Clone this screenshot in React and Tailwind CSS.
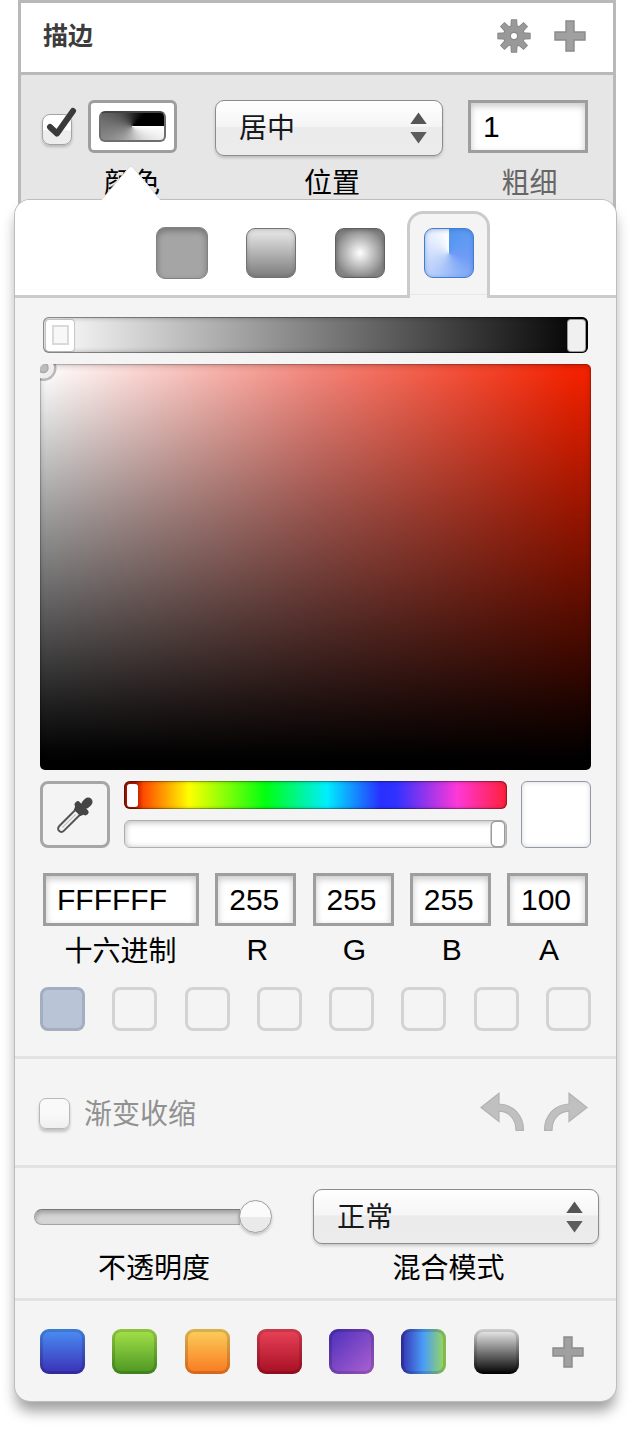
import React from "react";

const HEAVY = "border-[3px] border-[#9e9e9e] bg-white";

function PlusIcon({ className }) {
  return (
    <svg className={className} width="32" height="32" viewBox="0 0 32 32">
      <path d="M12 1h8v11h11v8H20v11h-8V20H1v-8h11z" fill="#a0a0a0" stroke="#8a8a8a" strokeWidth="1.4" />
    </svg>
  );
}

function GearIcon() {
  const teeth = [0, 45, 90, 135, 180, 225, 270, 315];
  const shape = (
    <>
      <circle cx="17" cy="17" r="10" />
      {teeth.map((a) => (
        <path key={a} d="M14.2 9 14.7 1.2h4.6L19.8 9z" transform={`rotate(${a} 17 17)`} />
      ))}
    </>
  );
  return (
    <svg className="mr-[-1px] mb-[4px]" width="34" height="34" viewBox="0 0 34 34">
      <g fill="#999" stroke="#888" strokeWidth="1.8">{shape}</g>
      <g fill="#999">{shape}</g>
      <circle cx="17" cy="17" r="3.6" fill="#fff" stroke="#888" strokeWidth="1.2" />
    </svg>
  );
}

function Stepper() {
  return (
    <svg width="17" height="32" viewBox="0 0 17 32">
      <path d="M8.5 0.5 16.7 12H.3z" fill="#555" />
      <path d="M8.5 31.5 16.7 20H.3z" fill="#5c5c5c" />
    </svg>
  );
}

function Select({ value, className }) {
  return (
    <div
      className={`flex h-[56px] items-center justify-between rounded-[9px] border-[1.5px] border-[#8c8c8c] bg-[linear-gradient(to_bottom,#ffffff_0%,#f5f5f5_47%,#ebebeb_49%,#ececec_100%)] pr-[15px] pl-[23px] shadow-[0_2px_3px_rgba(0,0,0,0.18)] ${className}`}
    >
      <span className="mt-[2px] text-[28px] leading-none text-[#16191c]">{value}</span>
      <Stepper />
    </div>
  );
}

function Field({ value, className }) {
  return (
    <div
      className={`flex h-[53px] items-center text-[30px] leading-none shadow-[inset_0_3px_7px_rgba(0,0,0,0.22)] ${HEAVY} ${className}`}
    >
      {value}
    </div>
  );
}

function Undo({ flip }) {
  return (
    <svg className={flip ? "-scale-x-100" : ""} width="45" height="40" viewBox="0 0 45 40">
      <path
        d="M1 15.500 19 1.300V12C33 12.500 43.500 23 43.500 38.300H36C36 27 29 19.500 19 19.200V29.500z"
        fill="#c0c0c0"
        stroke="#b3b3b3"
        strokeWidth="1.200"
      />
    </svg>
  );
}

function Eyedropper() {
  return (
    <svg width="36" height="36" viewBox="0 0 36 36">
      <g transform="rotate(45 18 18)">
        <rect x="14.700" y="11" width="6.600" height="29.500" rx="3.300" fill="#f4f4f4" stroke="#555" strokeWidth="2" />
        <path d="M18 17v19" stroke="#bbb" strokeWidth="1" />
        <rect x="13.600" y="-5" width="8.800" height="12" rx="4.400" fill="#454545" />
        <path d="M14.600 3h6.800v4h-6.800z" fill="#454545" />
        <path d="M12 5.500h12q2.500 .3 2.500 3t-2.500 3.300l-1.500 3.200h-9L12 11.800q-2.500-.3-2.500-3.300t2.500-3z" fill="#454545" />
      </g>
    </svg>
  );
}

const presets = [
  "bg-[linear-gradient(#4a90f5,#3a2fb5)]",
  "bg-[linear-gradient(#a6e34a,#4a9622)]",
  "bg-[linear-gradient(#fbd05c,#f97820)]",
  "bg-[linear-gradient(#ea4358,#a60f22)]",
  "bg-[linear-gradient(135deg,#4a2ebb,#b062d2)]",
  "bg-[linear-gradient(to_right,#3530b0,#4a9df8_50%,#9fdc50)]",
  "bg-[linear-gradient(#f2f2f2,#000)]",
];

export default function App() {
  return (
    <div className="h-[1429px] w-[631px] overflow-hidden bg-white font-['Liberation_Sans','Noto_Sans_CJK_SC',sans-serif] text-black">
      <section className="ml-[18px] h-[240px] w-[598px] border-x-[3px] border-t-[3px] border-[#b9b9b9] bg-[#e6e6e6]">
        <header className="flex h-[72px] items-center border-b-[3px] border-[#b9b9b9] bg-white pr-[27px] pl-[22px]">
          <h1 className="mb-[2px] flex-1 text-[25px] leading-none font-bold text-[#3c3c3c]">描边</h1>
          <GearIcon />
          <PlusIcon className="mb-[4px] ml-[24px]" />
        </header>
        <div className="flex pt-[25px] pl-[21px]">
          <div className="flex w-[137px] flex-col">
            <div className="flex">
              <div className="mt-[14px] h-[31px] w-[30px] rounded-[8px] border border-[#a4a4a4] bg-[linear-gradient(#fff_50%,#ededed_55%)] shadow-[0_2px_3px_rgba(0,0,0,0.2)]">
                <svg className="-mt-[8px] ml-[3px]" width="32" height="34" viewBox="0 0 32 34">
                  <path d="M4 20 11 26.500 27 4" fill="none" stroke="#3a3a3a" strokeWidth="6" strokeLinecap="round" strokeLinejoin="round" />
                </svg>
              </div>
              <div className={`ml-[16px] flex h-[53px] w-[89px] items-center justify-center rounded-[6px] ${HEAVY}`}>
                <div className="h-[31px] w-[67px] rounded-[6px] border-[2.5px] border-[#6e6e6e] border-t-[#444] bg-[conic-gradient(from_90deg,#fff,#777_50%,#000_88%)]" />
              </div>
            </div>
            <div className="mt-[17px] ml-[62px] text-[28px] leading-[28px]">颜色</div>
          </div>
          <div className="ml-[36px] w-[228px]">
            <Select value="居中" />
            <div className="mt-[14px] pl-[6px] text-center text-[28px] leading-[28px]">位置</div>
          </div>
          <div className="ml-[25px] w-[120px]">
            <Field value="1" className="pl-[12px]" />
            <div className="mt-[17px] pl-[3px] text-center text-[28px] leading-[28px] text-[#666]">粗细</div>
          </div>
        </div>
      </section>

      <main className="relative -mt-[40px] ml-[15px] flex h-[1201px] w-[601px] flex-col rounded-[15px] bg-[#f4f4f4] shadow-[0_0_0_1px_#bdbdbd,0_11px_14px_-1px_rgba(0,0,0,0.38)]">
        <svg className="absolute -top-[35px] left-[86px]" width="60" height="37" viewBox="0 0 60 37">
          <path d="M1 34.500 28 2.500Q30 0 32 2.500L59 34.500V37H1z" fill="#fff" />
          <path d="M1 34.500 28 2.500Q30 0 32 2.500L59 34.500" fill="none" stroke="#dcdcdc" strokeWidth="1" />
        </svg>
        <div className="flex h-[98px] shrink-0 rounded-t-[15px] border-b-[3px] border-[#cbcbcb] bg-white pl-[141px]">
          <div className="mt-[27px] h-[52px] w-[52px] rounded-[9px] border-[1.5px] border-[#818181] bg-[#a5a5a5] shadow-[inset_0_3px_6px_rgba(0,0,0,0.3)]" />
          <div className="mt-[28px] ml-[38px] h-[50px] w-[50px] rounded-[9px] border-[1.500px] border-[#737373] bg-[linear-gradient(#ebebeb,#7c7c7c)] shadow-[inset_0_1px_4px_rgba(0,0,0,0.2)]" />
          <div className="mt-[28px] ml-[39px] h-[50px] w-[50px] rounded-[9px] border-[1.500px] border-[#606060] bg-[radial-gradient(circle,#fff,#858585_75%)] shadow-[inset_0_1px_4px_rgba(0,0,0,0.25)]" />
          <div className="mt-[11px] ml-[22px] flex h-[87px] w-[83px] justify-center rounded-t-[16px] border-x-[3px] border-t-[3px] border-[#cbcbcb] bg-[linear-gradient(to_bottom,#f4f4f4_80px,#e7e7e7_80px,#e7e7e7_81px,#f4f4f4_81px)] pt-[14px]">
            <div className="h-[50px] w-[50px] rounded-[9px] border-[1.500px] border-[#3f7fd2] bg-[conic-gradient(#5297f0,#709df6_30%,#b5cdf9_60%,#fff)] shadow-[inset_0_1px_4px_rgba(40,90,180,0.4)]" />
          </div>
        </div>

        <div className="mt-[19px] ml-[28px] flex h-[36px] w-[545px] items-center justify-between rounded-[6px] bg-[linear-gradient(to_right,#ffffff,#000000)] px-[3px] shadow-[inset_0_0_0_1px_rgba(0,0,0,0.35),inset_0_0_5px_1px_rgba(0,0,0,0.28)]">
          <div className="flex h-[31px] w-[28px] items-center justify-center rounded-[3px] bg-white shadow-[0_0_1px_1px_rgba(0,0,0,0.18)]">
            <div className="h-[20px] w-[17px] border-2 border-[#dadada] bg-[#f8f8f8]" />
          </div>
          <div className="h-[31px] w-[17px] rounded-[3px] bg-[#f0f0f0] shadow-[0_0_0_1px_#999]" />
        </div>

        <div className="mt-[11px] ml-[25px] h-[406px] w-[551px] overflow-hidden rounded-[5px] bg-[linear-gradient(to_bottom,rgba(0,0,0,0)_1%,rgba(0,0,0,0.4)_38%,rgba(0,0,0,0.52)_50%,rgba(0,0,0,0.74)_71%,rgba(0,0,0,0.88)_84%,rgba(0,0,0,0.98)_95%,#000_98%),linear-gradient(to_right,#ffffff_1%,#f4857a_50%,#f52200_97%)] shadow-[inset_0_0_1px_1px_rgba(0,0,0,0.22),inset_0_2px_6px_rgba(0,0,0,0.2)]">
          <svg width="20" height="20" viewBox="0 0 20 20">
            <circle cx="3.500" cy="4" r="11.500" fill="none" stroke="rgba(0,0,0,0.25)" strokeWidth="3" />
            <circle cx="3.500" cy="4" r="8" fill="none" stroke="#eee" strokeWidth="5" />
            <circle cx="3.500" cy="4" r="4.500" fill="#bcbcbc" stroke="#a8a8a8" strokeWidth="1.500" />
          </svg>
        </div>

        <div className="mt-[11px] ml-[25px] flex w-[551px]">
          <div className="flex h-[67px] w-[70px] items-center justify-center rounded-[8px] border-[3px] border-[#a6a6a6] bg-[#f4f4f4]">
            <Eyedropper />
          </div>
          <div className="ml-[14px] flex w-[383px] flex-col">
            <div className="flex h-[28px] items-center rounded-[6px] bg-[linear-gradient(to_right,#a81500_0%,#a81500_3%,#ff4a00_5%,#ffff00_17%,#00ff10_37%,#00eeff_53%,#2830ff_67%,#3032ff_71%,#ff38d8_87%,#ff2038_100%)] px-[3px] shadow-[inset_0_0_0_1px_rgba(0,0,0,0.28),inset_0_0_4px_rgba(0,0,0,0.35)]">
              <div className="h-[23px] w-[11px] rounded-[3px] bg-white" />
            </div>
            <div className="mt-[11px] flex h-[28px] items-center justify-end rounded-[6px] border border-[#aeaeae] bg-white pr-[2px] shadow-[inset_0_1px_6px_rgba(0,0,0,0.3)]">
              <div className="h-[24px] w-[12px] rounded-[4px] bg-white shadow-[0_0_0_1.500px_#9b9b9b]" />
            </div>
          </div>
          <div className="ml-[14px] h-[67px] w-[70px] rounded-[6px] border-[1.500px] border-[#9299a8] bg-white shadow-[inset_0_0_5px_rgba(0,0,0,0.16)]" />
        </div>

        <div className="mt-[25px] ml-[28px] flex w-[545px] text-center">
          <div className="w-[156px]">
            <Field value="FFFFFF" className="pl-[11px]" />
            <div className="mt-[12px] pr-px text-[28px] leading-[28px]">十六进制</div>
          </div>
          {[["255", "R"], ["255", "G"], ["255", "B"], ["100", "A"]].map(([v, l]) => (
            <div key={l} className="ml-[16.250px] w-[81px]">
              <Field value={v} className="justify-center pr-[3px]" />
              <div className="mt-[10px] pl-[3px] text-[30px] leading-[28px]">{l}</div>
            </div>
          ))}
        </div>

        <div className="mt-[21px] ml-[25px] flex w-[551px] justify-between">
          <div className="h-[44px] w-[45px] rounded-[8px] border-[3px] border-[#a3afc1] bg-[#b9c4d7]" />
          {[1, 2, 3, 4, 5, 6, 7].map((n) => (
            <div key={n} className="h-[44px] w-[45px] rounded-[8px] border-[3px] border-[#d3d3d3]" />
          ))}
        </div>

        <div className="mt-[25px] flex h-[112px] shrink-0 items-center border-y-[3px] border-[#e2e2e2] pr-[28px] pl-[24px]">
          <div className="mt-[2px] h-[31px] w-[31px] rounded-[7px] border border-[#b8b8b8] bg-[linear-gradient(#f9f9f9_48%,#efefef)] shadow-[0_3px_3px_rgba(0,0,0,0.2)]" />
          <span className="mt-[6px] ml-[14px] flex-1 text-[28px] leading-none text-[#919191]">渐变收缩</span>
          <Undo />
          <div className="w-[18px]" />
          <Undo flip />
        </div>

        <div className="flex h-[133px] shrink-0 border-b-[3px] border-[#e2e2e2] pt-[21px] pl-[19px]">
          <div className="w-[239px]">
            <div className="flex h-[55px] items-center">
              <div className="h-[16px] w-[206px] rounded-l-full border border-r-0 border-[#a4a4a4] border-t-[#777] bg-[#d5d5d5] shadow-[inset_0_3px_4px_rgba(0,0,0,0.25)]" />
              <div className="-ml-px h-[33px] w-[33px] rounded-full border border-[#9c9c9c] bg-[linear-gradient(#fbfbfb_52%,#eaeaea_53%)] shadow-[0_2px_3px_rgba(0,0,0,0.2)]" />
            </div>
            <div className="mt-[11px] pl-px text-center text-[28px] leading-[28px]">不透明度</div>
          </div>
          <div className="ml-[40px] w-[286px]">
            <Select value="正常" className="!h-[55px]" />
            <div className="mt-[11px] pr-[15px] text-center text-[28px] leading-[28px]">混合模式</div>
          </div>
        </div>

        <div className="mt-[28px] ml-[25px] flex w-[551px] items-center justify-between">
          {presets.map((bg) => (
            <div key={bg} className={`h-[45px] w-[45px] rounded-[9px] shadow-[inset_0_0_0_3px_rgba(0,0,0,0.14)] ${bg}`} />
          ))}
          <div className="flex w-[45px] justify-center">
            <PlusIcon />
          </div>
        </div>
      </main>
    </div>
  );
}
